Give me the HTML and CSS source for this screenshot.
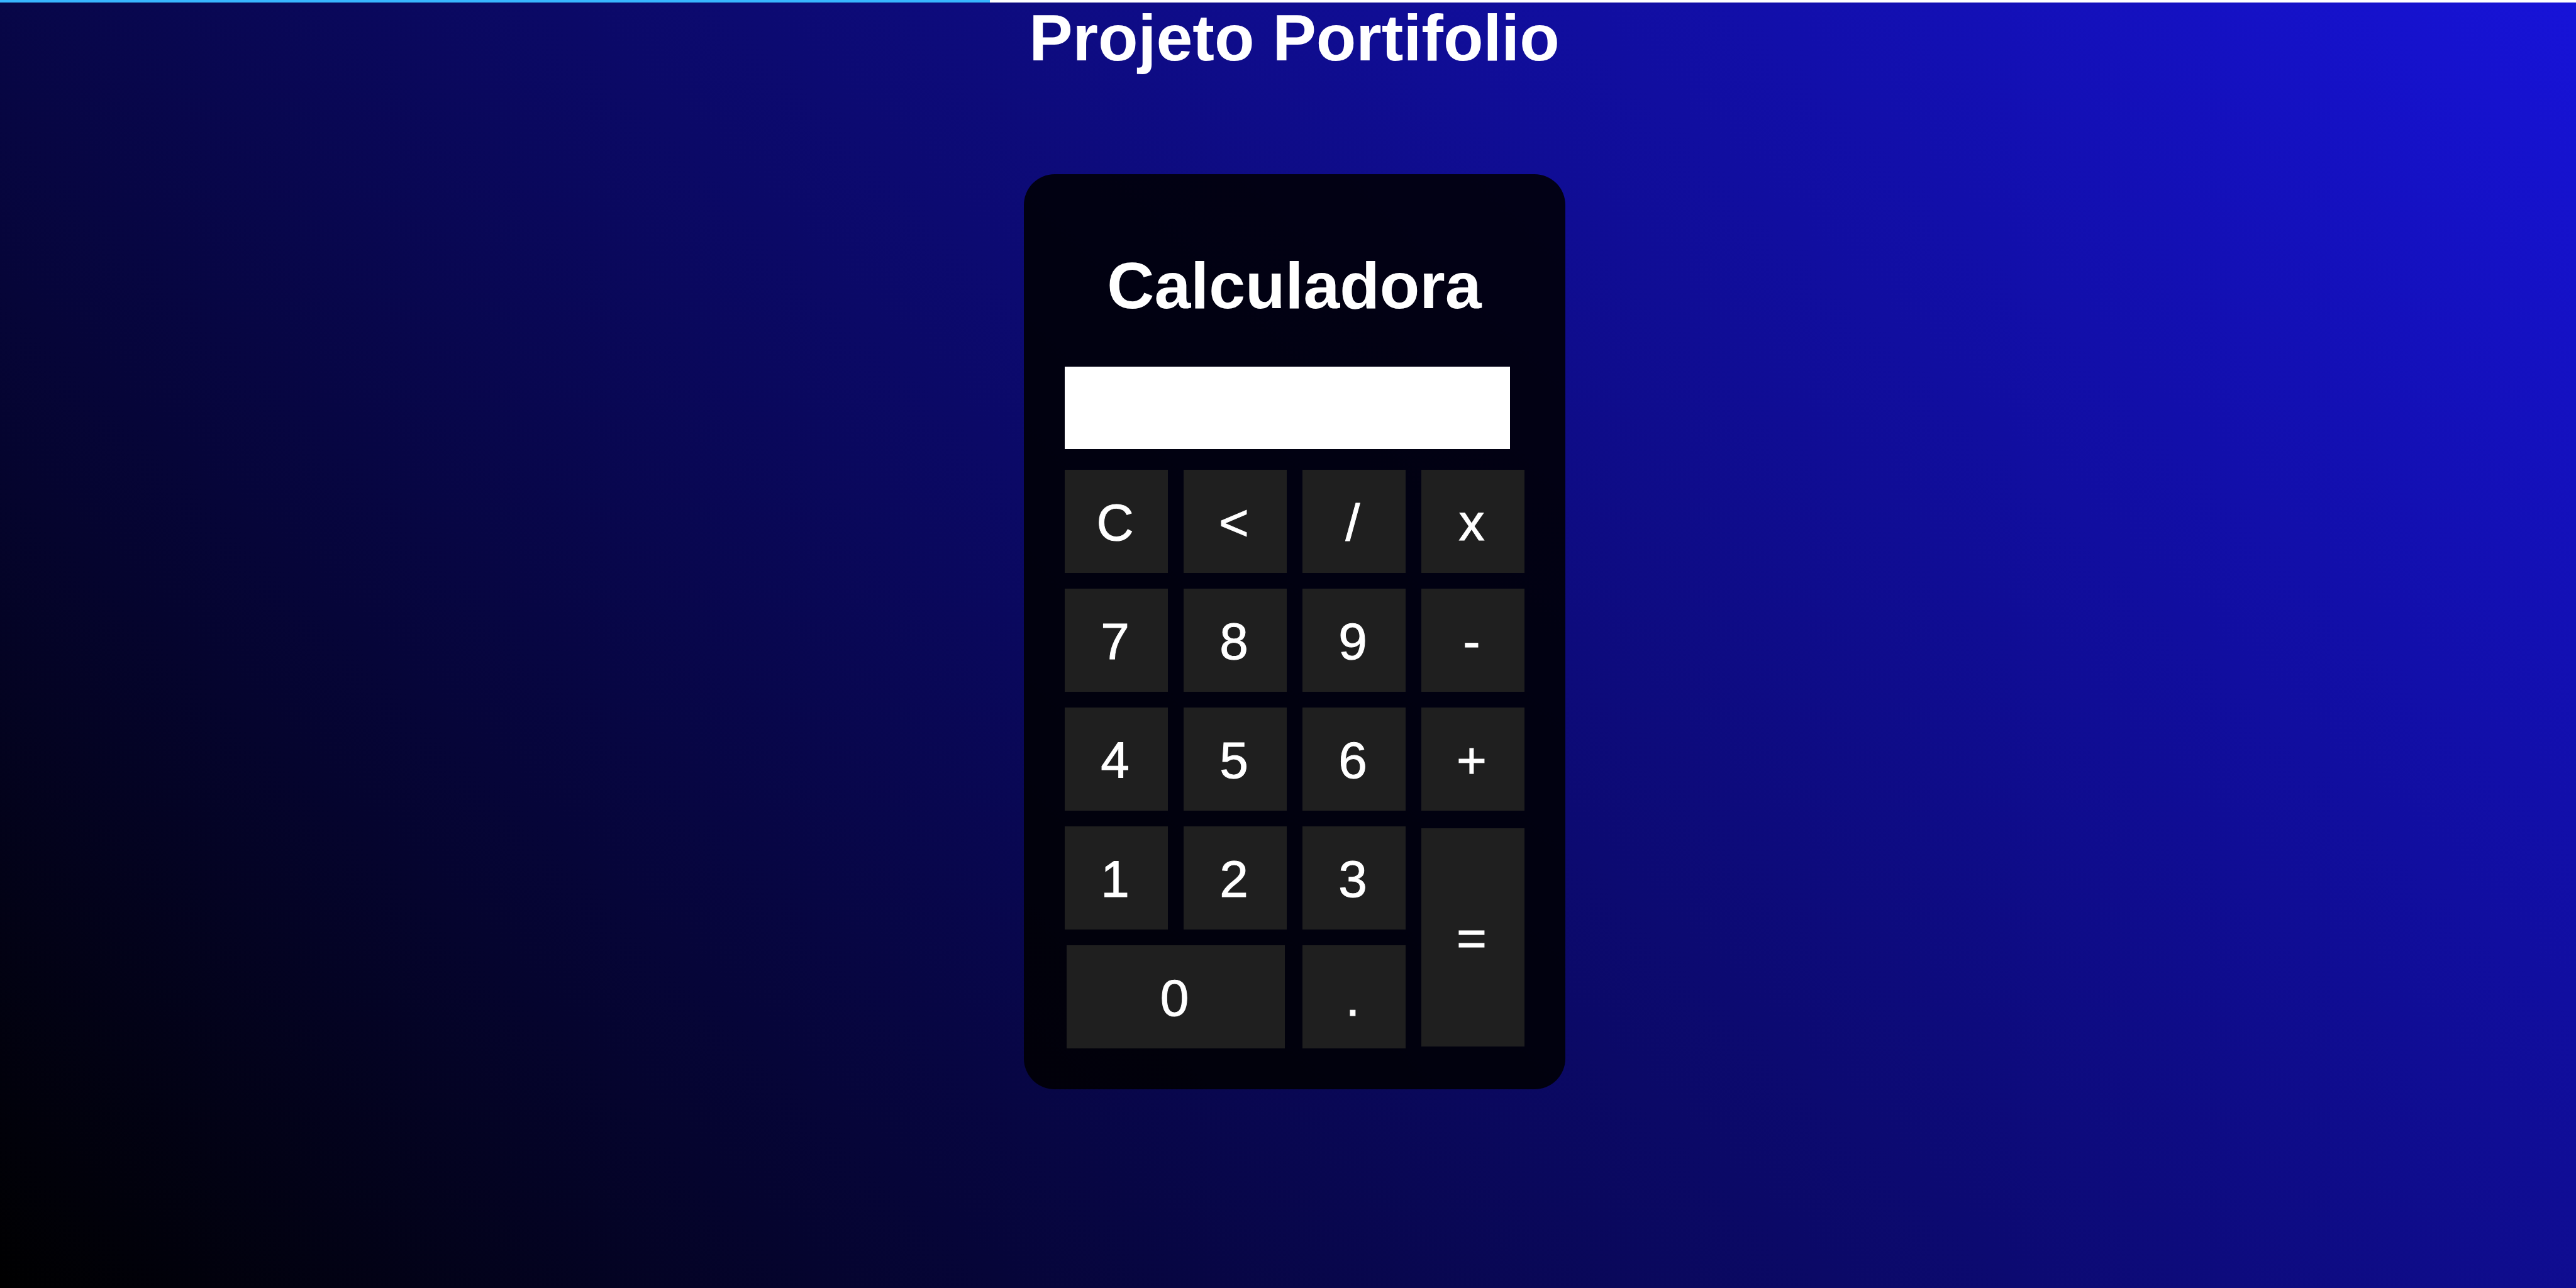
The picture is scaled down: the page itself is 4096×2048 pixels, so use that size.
FILE: index.html
```html
<!DOCTYPE html>
<html lang="pt-BR">
<head>
  <meta charset="utf-8">
  <meta name="viewport" content="width=device-width, initial-scale=1">
  <title>Projeto Portifolio</title>
  <link rel="stylesheet" href="styles.css">
</head>
<body>
  <div class="progress"><div class="progress-fill" style="width: 38.43%"></div></div>
  <main class="page">
    <h1 class="page-title">Projeto Portifolio</h1>
    <section class="calculator">
      <h2 class="calculator-title">Calculadora</h2>
      <input class="display" type="text" aria-label="Resultado" readonly>
      <div class="keys">
        <button class="key" type="button">C</button>
        <button class="key" type="button">&lt;</button>
        <button class="key" type="button">/</button>
        <button class="key" type="button">x</button>
        <button class="key" type="button">7</button>
        <button class="key" type="button">8</button>
        <button class="key" type="button">9</button>
        <button class="key" type="button">-</button>
        <button class="key" type="button">4</button>
        <button class="key" type="button">5</button>
        <button class="key" type="button">6</button>
        <button class="key" type="button">+</button>
        <button class="key" type="button">1</button>
        <button class="key" type="button">2</button>
        <button class="key" type="button">3</button>
        <button class="key key-tall" type="button">=</button>
        <button class="key key-wide" type="button">0</button>
        <button class="key" type="button">.</button>
      </div>
    </section>
  </main>
</body>
</html>
```

FILE: styles.css
```css
* {
  box-sizing: border-box;
}

body {
  margin: 0;
  min-height: 100vh;
  background: linear-gradient(45deg, #000000, #1713d8);
  color: #ffffff;
  font-family: "Liberation Sans", Arial, sans-serif;
}

.progress {
  height: 4px;
  background: #ffffff;
}

.progress-fill {
  height: 100%;
  background: #38b6ff;
}

.page {
  display: flex;
  flex-direction: column;
  align-items: center;
  padding-left: 20px;
}

.page-title,
.calculator-title {
  margin: 0;
  font-size: 104px;
  font-weight: 700;
  text-align: center;
}

.page-title {
  margin-bottom: 161px;
  line-height: 112px;
}

.calculator {
  padding: 65px;
  border-radius: 49px;
  background: rgba(0, 0, 0, 0.85);
}

.calculator-title {
  margin: 52px 0 68px;
  line-height: 121px;
}

.display {
  display: block;
  width: 708px;
  height: 131px;
  margin: 0 0 33px;
  padding: 0 16px;
  border: 0;
  background: #ffffff;
  font: inherit;
  font-size: 82px;
}

.keys {
  display: grid;
  grid-template-columns: repeat(4, 164px);
  grid-auto-rows: 164px;
  gap: 25px;
}

.key {
  margin: 0;
  padding: 3px 3px 0 0;
  border: 0;
  background: #1f1f1f;
  color: #ffffff;
  font: inherit;
  font-size: 82px;
  -webkit-text-stroke: 1px #ffffff;
  cursor: pointer;
}

.key-tall {
  grid-row: span 2;
  margin: 3px 0;
}

.key-wide {
  grid-column: span 2;
  margin: 0 3px;
}
```
